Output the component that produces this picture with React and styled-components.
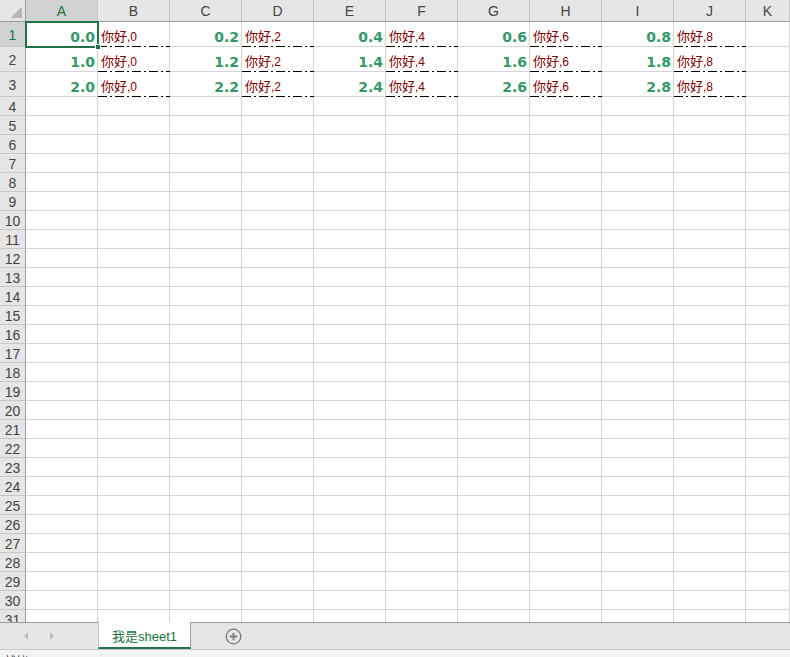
import React from 'react';
import styled, { createGlobalStyle, css } from 'styled-components';

const GlobalStyle = createGlobalStyle`
  html, body {
    margin: 0;
    padding: 0;
    background: #ffffff;
    overflow: hidden;
  }
  * {
    box-sizing: border-box;
  }
`;

const COLS = ['A', 'B', 'C', 'D', 'E', 'F', 'G', 'H', 'I', 'J', 'K'];
const ROW_COUNT = 31;

const Window = styled.div`
  display: flex;
  flex-direction: column;
  width: 790px;
  height: 657px;
  overflow: hidden;
  font-family: 'Liberation Sans', 'Noto Sans CJK SC', sans-serif;
`;

const Sheet = styled.div`
  flex: none;
  height: 622px;
  overflow: hidden;
  display: grid;
  grid-template-columns: 26px repeat(10, 72px) 1fr;
  grid-template-rows: 22px repeat(3, 25px) repeat(${ROW_COUNT - 3}, 19px);
`;

const Corner = styled.div`
  background: #e6e6e6;
  border-right: 1px solid #9b9b9b;
  border-bottom: 1px solid #9b9b9b;
  display: flex;
  justify-content: flex-end;
  align-items: flex-end;
  padding: 0 3px 3px 0;
`;

const CornerMark = styled.div`
  width: 11px;
  height: 11px;
  background: linear-gradient(135deg, transparent 50%, #b7b7b7 50%);
`;

const ColHeader = styled.div`
  background: ${({ $active }) => ($active ? '#d2d2d2' : '#e6e6e6')};
  color: ${({ $active }) => ($active ? '#217346' : '#444444')};
  border-right: 1px solid #c6c6c6;
  border-bottom: 1px solid #9b9b9b;
  display: flex;
  align-items: center;
  justify-content: center;
  font-size: 14px;
  padding-top: 1px;
`;

const RowHeader = styled.div`
  background: ${({ $active }) => ($active ? '#d2d2d2' : '#e6e6e6')};
  color: ${({ $active }) => ($active ? '#217346' : '#444444')};
  border-right: 1px solid #9b9b9b;
  border-bottom: 1px solid #c6c6c6;
  display: flex;
  align-items: center;
  justify-content: center;
  font-size: 14px;
  padding-top: 2px;
`;

const Cell = styled.div`
  position: relative;
  border-right: 1px solid #d4d4d4;
  border-bottom: 1px solid #d4d4d4;
  display: flex;
  align-items: flex-end;
  min-width: 0;
  white-space: nowrap;
  ${({ $dashDot }) =>
    $dashDot &&
    css`
      border-bottom-color: transparent;
      &::after {
        content: '';
        position: absolute;
        left: 0;
        right: -1px;
        bottom: -1px;
        height: 1px;
        background: repeating-linear-gradient(
          90deg,
          #000 0 9px,
          transparent 9px 12px,
          #000 12px 14px,
          transparent 14px 17px
        );
      }
    `}
`;

const NumberValue = styled.span`
  flex: 1;
  text-align: right;
  padding: 0 2px 1px 0;
  font-family: 'DejaVu Sans', sans-serif;
  font-weight: bold;
  font-size: 14px;
  line-height: 16px;
  color: #339966;
`;

const TextValue = styled.span`
  padding: 0 0 0 3px;
  font-family: 'Noto Sans CJK SC', sans-serif;
  font-size: 13px;
  line-height: 17px;
  color: #800000;
`;

const Suffix = styled.span`
  font-family: 'Liberation Sans', sans-serif;
  font-size: 12px;
`;

const Selection = styled.div`
  position: absolute;
  left: -1px;
  top: -1px;
  width: 74px;
  height: 27px;
  border: 2px solid #217346;
  pointer-events: none;
  z-index: 2;
`;

const FillHandle = styled.div`
  position: absolute;
  right: -4px;
  bottom: -4px;
  width: 6px;
  height: 6px;
  background: #217346;
  border: 1px solid #ffffff;
`;

const TabBar = styled.div`
  flex: none;
  height: 28px;
  background: #e6e6e6;
  border-top: 1px solid #9b9b9b;
  border-bottom: 1px solid #c6c6c6;
  display: flex;
  align-items: stretch;
`;

const NavArea = styled.div`
  width: 98px;
  display: flex;
  align-items: center;
  padding-left: 24px;
  gap: 22px;
`;

const NavArrow = styled.div`
  width: 0;
  height: 0;
  border-top: 4px solid transparent;
  border-bottom: 4px solid transparent;
  ${({ $dir }) =>
    $dir === 'left'
      ? css`border-right: 4px solid #bcbcbc;`
      : css`border-left: 4px solid #bcbcbc;`}
`;

const SheetTab = styled.div`
  width: 93px;
  margin-top: -1px;
  background: #ffffff;
  border-left: 1px solid #c6c6c6;
  border-right: 1px solid #9b9b9b;
  border-bottom: 2px solid #217346;
  display: flex;
  align-items: center;
  justify-content: center;
  font-family: 'Liberation Sans', 'Noto Sans CJK SC', sans-serif;
  font-size: 13px;
  color: #217346;
  padding-top: 1px;
`;

const AddButton = styled.div`
  width: 84px;
  display: flex;
  align-items: center;
  justify-content: center;
  padding-top: 1px;
`;

const StatusBar = styled.div`
  flex: none;
  height: 24px;
  background: #f3f3f3;
  padding: 2px 0 0 4px;
  font-family: 'Noto Sans CJK SC', sans-serif;
  font-size: 12px;
  color: #444444;
`;

const cellContent = (row, colIndex) => {
  if (row > 3 || colIndex > 9) return null;
  const pair = Math.floor(colIndex / 2);
  if (colIndex % 2 === 0) {
    return <NumberValue>{(row - 1 + pair * 0.2).toFixed(1)}</NumberValue>;
  }
  return (
    <TextValue>
      你好<Suffix>,{pair * 2}</Suffix>
    </TextValue>
  );
};

const PlusIcon = () => (
  <svg width="17" height="17" viewBox="0 0 17 17">
    <circle cx="8.5" cy="8.5" r="7.3" fill="none" stroke="#7a7a7a" strokeWidth="1.3" />
    <path d="M8.5 4.8v7.4M4.8 8.5h7.4" stroke="#7a7a7a" strokeWidth="1.8" />
  </svg>
);

const App = () => {
  const rows = Array.from({ length: ROW_COUNT }, (_, i) => i + 1);

  return (
    <Window>
      <GlobalStyle />
      <Sheet>
        <Corner>
          <CornerMark />
        </Corner>
        {COLS.map((c, i) => (
          <ColHeader key={c} $active={i === 0}>
            {c}
          </ColHeader>
        ))}
        {rows.map((r) => (
          <React.Fragment key={r}>
            <RowHeader $active={r === 1}>{r}</RowHeader>
            {COLS.map((c, i) => (
              <Cell key={c} $dashDot={r <= 3 && i % 2 === 1 && i < 10}>
                {cellContent(r, i)}
                {r === 1 && i === 0 && (
                  <Selection>
                    <FillHandle />
                  </Selection>
                )}
              </Cell>
            ))}
          </React.Fragment>
        ))}
      </Sheet>
      <TabBar>
        <NavArea>
          <NavArrow $dir="left" />
          <NavArrow $dir="right" />
        </NavArea>
        <SheetTab>我是sheet1</SheetTab>
        <AddButton>
          <PlusIcon />
        </AddButton>
      </TabBar>
      <StatusBar>就绪</StatusBar>
    </Window>
  );
};

export default App;
